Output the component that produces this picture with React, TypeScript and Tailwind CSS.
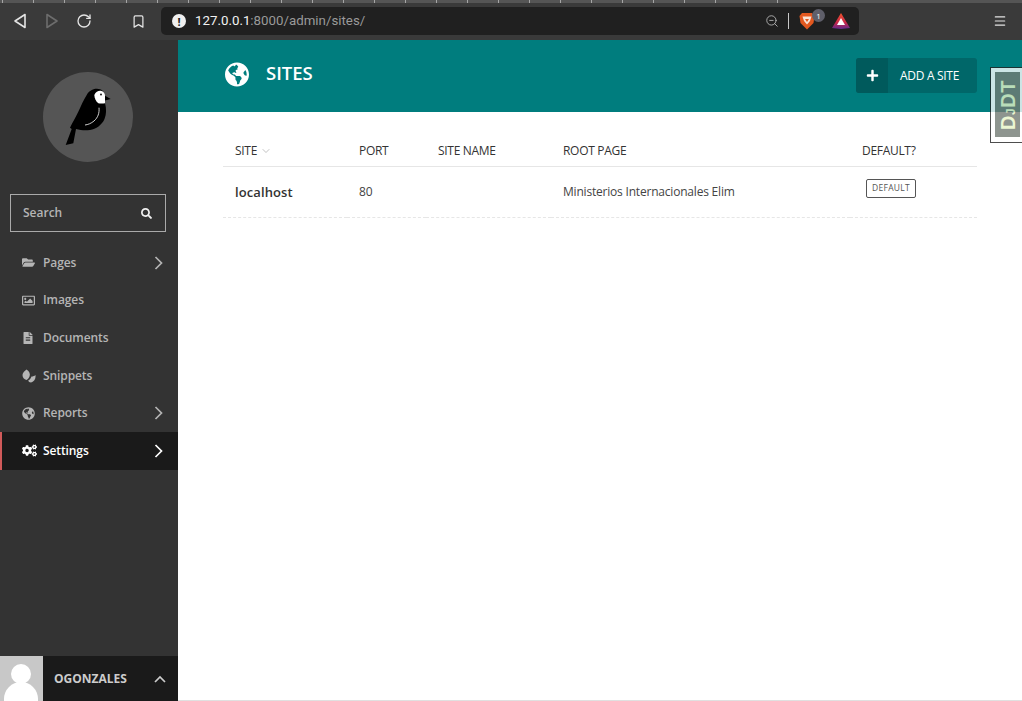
import { ChevronDown, RotateCw, Bookmark, ZoomOut, Menu } from "lucide-react";
import { FaCogs, FaFileAlt, FaFolderOpen, FaGlobeAmericas, FaPlus, FaRegImage, FaSearch } from "react-icons/fa";
import type { ReactNode } from "react";

const Leaves = () => (
  <svg viewBox="0 0 14 14" className="h-[14px] w-[14px]" fill="currentColor">
    <path d="M4.5 0.5 C7.5 2.5 8.5 5 7.5 7.5 C6.8 9.3 5.6 10.5 4.5 11 C2 10.5 0.5 8.5 0.5 6 C0.5 4 2.5 2 4.5 0.5 Z" />
    <path d="M13.5 6 C13.8 9 12.8 12.5 9 13.5 C7.5 13.5 6.5 12.5 6.2 11.5 C8 10.5 9 9 9.5 7.5 C10.8 7.6 12.4 7 13.5 6 Z" />
  </svg>
);

const navItems: { label: string; icon: ReactNode; arrow?: boolean; active?: boolean }[] = [
  { label: "Pages", icon: <FaFolderOpen size={13} />, arrow: true },
  { label: "Images", icon: <FaRegImage size={13} /> },
  { label: "Documents", icon: <FaFileAlt size={12} /> },
  { label: "Snippets", icon: <Leaves /> },
  { label: "Reports", icon: <FaGlobeAmericas size={13} />, arrow: true },
  { label: "Settings", icon: <FaCogs size={15} />, arrow: true, active: true },
];

const Bird = () => (
  <svg viewBox="0 0 90 90" className="h-[90px] w-[90px]">
    <circle cx="45" cy="45" r="45" fill="#555555" />
    <path
      d="M22.7 73 L30.3 71.3 L33 57 C38 58.5 43 58.5 47 58 C53 57 59 53 61.5 47 C63.5 42 63.5 37 62 31 L62 28.5 L67.7 27 L62 23.7 C61 19 58.5 17 54 16.8 C50 16.6 46 19 43.7 23 C40.5 28 38 34 35.3 39.7 C32.5 45.5 29.5 50.5 27 55.7 L28.7 57 Z"
      fill="#000000"
    />
    <path d="M51.3 23 C52.5 20 55 18.7 57 18.7 C60 18.7 62 21 62 23.5 L62 31.3 C59 31.8 56.5 31.5 55.3 31.3 C53 29.5 51.5 26.5 51.3 23 Z" fill="#ffffff" />
    <circle cx="58" cy="22.5" r="0.9" fill="#000000" />
    <path d="M56 35.7 C56.5 41 55 45.5 51 49 C48 51.5 45 52.6 42 53" fill="none" stroke="#ffffff" strokeWidth="0.8" />
  </svg>
);

const NavChevron = () => (
  <svg viewBox="0 0 9 14" className="ml-auto h-[14px] w-[9px]" fill="none" stroke="currentColor" strokeWidth="1.7">
    <path d="M1.5 1 L7.5 7 L1.5 13" />
  </svg>
);

const BackArrow = ({ dim }: { dim?: boolean }) => (
  <svg viewBox="0 0 14 16" className={dim ? "h-4 w-[14px] rotate-180" : "h-4 w-[14px]"} fill="none" stroke={dim ? "#6d6d6d" : "#e4e4e4"} strokeWidth="1.6" strokeLinejoin="round">
    <path d="M12 1.5 V14.5 L2 8 Z" />
  </svg>
);

const BraveIcon = () => (
  <svg viewBox="0 0 16 18" className="h-[18px] w-4">
    <path d="M3 1 H13 L15.5 4 L14.5 11 L8 17.5 L1.5 11 L0.5 4 Z" fill="#e2581f" />
    <path d="M3.5 4.5 H12.5 L11 9 L8 12.5 L5 9 Z" fill="#f8e3d6" />
    <path d="M6 7 H10 L8 10 Z" fill="#e2581f" />
  </svg>
);

const BatIcon = () => (
  <svg viewBox="0 0 18 16" className="h-4 w-[18px]">
    <defs>
      <linearGradient id="bat" x1="0" y1="0" x2="0" y2="1">
        <stop offset="0" stopColor="#f0542c" />
        <stop offset="0.6" stopColor="#c9264a" />
        <stop offset="1" stopColor="#5f2a8e" />
      </linearGradient>
    </defs>
    <path d="M9 0 L18 15 L9 16 L0 15 Z" fill="url(#bat)" />
    <path d="M9 5 L13 12 H5 Z" fill="#ffffff" />
  </svg>
);

const TableHead = ({ children }: { children: ReactNode }) => (
  <th className="h-[54px] border-b border-[#e6e6e6] pt-[29px] pb-[4px] pl-[12px] text-left align-middle text-[12px] font-normal tracking-[-0.3px] text-[#333333]">
    {children}
  </th>
);

export default function App() {
  return (
    <div className="relative flex h-[701px] w-[1022px] flex-col overflow-hidden bg-white font-['Open_Sans',sans-serif]">
      {/* browser bar */}
      <div className="flex h-10 shrink-0 flex-col bg-[#3a3a3a]">
        <div className="h-[3px] bg-[#555555]">
          <div className="h-full w-[807px] bg-[linear-gradient(90deg,#a5a5a5_1px,transparent_1px)] bg-[length:31px_3px] bg-[position:2px_0]" />
        </div>
        <div className="flex flex-1 items-center pb-[1px]">
          <div className="flex w-[161px] items-center pl-[13px] text-[#e4e4e4]">
            <BackArrow />
            <div className="ml-[18px]"><BackArrow dim /></div>
            <RotateCw size={16} strokeWidth={2} className="ml-[17px]" />
            <Bookmark size={15} strokeWidth={2} className="ml-[39px]" />
          </div>
          <div className="flex h-7 w-[698px] items-center rounded-[5px] bg-[#202020] pl-[11px] pr-[9px]">
            <span className="flex h-[14px] w-[14px] items-center justify-center rounded-full bg-[#f0f0f0] text-[11px] font-bold leading-none text-[#202020]">!</span>
            <span className="ml-[9px] font-['Roboto',sans-serif] text-[13.3px] text-[#f2f2f2]">
              127.0.0.1<span className="text-[#9a9a9a]">:8000/admin/sites/</span>
            </span>
            <ZoomOut size={14} strokeWidth={1.4} className="ml-auto text-[#c2c2c2]" />
            <div className="ml-[9px] h-4 w-px bg-[#c8c8c8]" />
            <div className="relative ml-[10px]">
              <BraveIcon />
              <span className="absolute -top-[3px] -right-[10px] flex h-[13px] w-[13px] items-center justify-center rounded-full bg-[#5f5f6a] text-[8px] text-white">1</span>
            </div>
            <div className="ml-[17px]"><BatIcon /></div>
          </div>
          <Menu size={14} strokeWidth={2} className="ml-[134px] text-[#e4e4e4]" />
        </div>
      </div>

      <div className="flex min-h-0 flex-1">
        {/* sidebar */}
        <aside className="flex w-[178px] shrink-0 flex-col bg-[#333333]">
          <div className="pt-[32px] pl-[43px]">
            <Bird />
          </div>
          <div className="ml-[10px] mt-[32px] flex h-[38px] w-[156px] items-center justify-between border border-[#aaaaaa] pl-[12px] pr-[13px]">
            <span className="text-[12px] font-semibold text-[#b5b5b5]">Search</span>
            <FaSearch size={11} className="text-[#f0f0f0]" />
          </div>
          <nav className="mt-[12px]">
            {navItems.map((item) => (
              <div
                key={item.label}
                className={`flex h-[37.6px] items-center pr-[15px] ${
                  item.active ? "border-l-2 border-[#d05a5a] bg-[#1a1a1a] pl-[20px] text-white" : "pl-[22px] text-[#b5b5b5]"
                }`}
              >
                <span className="flex w-[21px] shrink-0 items-center">{item.icon}</span>
                <span className="text-[12px] font-semibold tracking-[-0.1px]">{item.label}</span>
                {item.arrow && <NavChevron />}
              </div>
            ))}
          </nav>
          <div className="mt-auto flex h-[45px] items-center bg-[#1a1a1a]">
            <div className="relative h-[45px] w-[43px] overflow-hidden bg-[#c8c8c8]">
              <div className="absolute left-[11px] top-[8px] h-[20px] w-[20px] rounded-full bg-white" />
              <div className="absolute left-[4px] top-[26px] h-[40px] w-[34px] rounded-t-full bg-white" />
            </div>
            <span className="ml-[11px] text-[12px] font-bold text-[#cccccc]">OGONZALES</span>
            <svg viewBox="0 0 12 8" className="ml-auto mr-[12px] h-2 w-3 text-[#cccccc]" fill="none" stroke="currentColor" strokeWidth="1.7">
              <path d="M1 7 L6 2 L11 7" />
            </svg>
          </div>
        </aside>

        {/* main */}
        <main className="flex min-w-0 flex-1 flex-col border-b border-[#e0e0e0]">
          <header className="flex h-[72px] shrink-0 items-center justify-between bg-[#007d7e] pl-[47px] pr-[45px]">
            <div className="mb-[4px] flex items-center">
              <span className="flex h-6 w-6 items-center justify-center text-white">
                <FaGlobeAmericas size={25} />
              </span>
              <h1 className="ml-[17px] mb-[2px] text-[18.5px] font-semibold text-white">SITES</h1>
            </div>
            <button className="mb-[1px] flex h-[35px] w-[121px] items-center overflow-hidden rounded-[3px] bg-[#006769] text-white">
              <span className="flex h-full w-[32px] items-center justify-center bg-[#005a5c]">
                <FaPlus size={13} />
              </span>
              <span className="ml-[12px] text-[12px] tracking-[-0.3px]">ADD A SITE</span>
            </button>
          </header>

          <div className="px-[45px]">
            <table className="w-[754px] table-fixed border-collapse">
              <colgroup>
                <col className="w-[124px]" />
                <col className="w-[79px]" />
                <col className="w-[125px]" />
                <col className="w-[299px]" />
                <col className="w-[127px]" />
              </colgroup>
              <thead>
                <tr>
                  <TableHead>
                    <span className="inline-flex items-center">
                      SITE <ChevronDown size={12} strokeWidth={1.2} className="ml-[3px] text-[#999999]" />
                    </span>
                  </TableHead>
                  <TableHead>PORT</TableHead>
                  <TableHead>SITE NAME</TableHead>
                  <TableHead>ROOT PAGE</TableHead>
                  <TableHead>DEFAULT?</TableHead>
                </tr>
              </thead>
              <tbody>
                <tr className="h-[51px] border-b border-dashed border-[#e6e6e6]">
                  <td className="pl-[12px] pt-[2px] text-[13px] font-semibold tracking-[0.1px] text-[#333333]">localhost</td>
                  <td className="pl-[12px] text-[12px] text-[#444444]">80</td>
                  <td className="pl-[12px]" />
                  <td className="pl-[12px] text-[12px] tracking-[-0.2px] text-[#444444]">Ministerios Internacionales Elim</td>
                  <td className="pl-[16px]">
                    <span className="mb-[7px] flex h-[19px] w-[50px] items-center justify-center rounded-[2px] border border-[#555555] text-[8.5px] tracking-[0.3px] text-[#555555]">
                      DEFAULT
                    </span>
                  </td>
                </tr>
              </tbody>
            </table>
          </div>
        </main>
      </div>

      {/* debug toolbar handle */}
      <div className="absolute left-[990px] top-[67px] h-[76px] w-[32px] border border-r-0 border-[#222222] bg-white pl-[4px] pt-[4px] pb-[5px] opacity-80">
        <div className="flex h-full w-[25px] items-center justify-center bg-[#737b74]">
          <span className="-rotate-90 whitespace-nowrap font-['Liberation_Sans',sans-serif] text-[20px] font-bold tracking-[0.5px] text-[#e8f5c8]">
            D<span className="text-[12px]">J</span>DT
          </span>
        </div>
      </div>
    </div>
  );
}
